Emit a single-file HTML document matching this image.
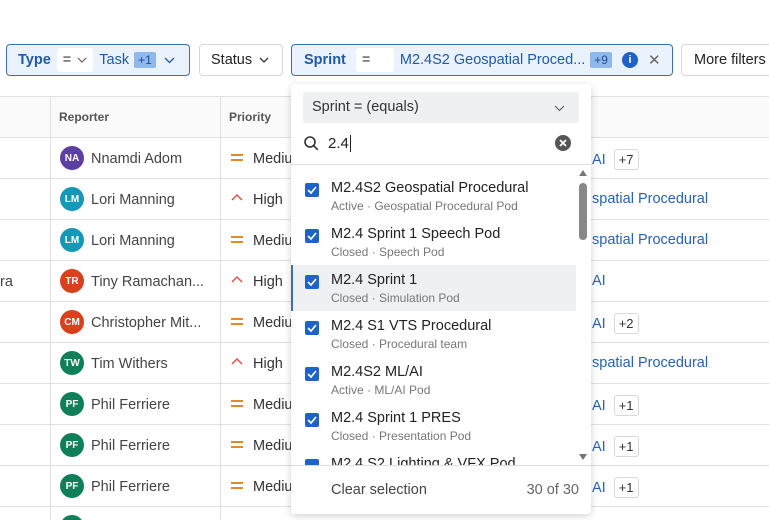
<!DOCTYPE html>
<html style="overflow:hidden;width:769px;height:520px"><head><style>
*{box-sizing:border-box;margin:0;padding:0}
body{width:769px;height:520px;overflow:hidden;background:#fff;font-family:"Liberation Sans",sans-serif;position:relative;color:#333}
.a{position:absolute}
.chip{position:absolute;top:44px;height:32px;border-radius:4px;font-size:14.5px;display:flex;align-items:center;white-space:nowrap}
.blue{background:#e9f2fd;border:1px solid #3f6fa8;color:#1f5aa6}
.wht{background:#fff;border:1px solid #d6d6d6;color:#222}
.eq{background:#fff;height:24px;display:flex;align-items:center;padding:0 6px;color:#333;border-radius:3px}
.badge{background:#8fb8ec;color:#1f4f8f;font-size:12px;padding:1px 4px;border-radius:2px}
.hl{position:absolute;left:0;width:769px;height:1px;background:#e0e0e0}
.vl{position:absolute;top:97px;width:1px;height:423px;background:#e0e0e0}
.av{position:absolute;left:60px;width:24px;height:24px;border-radius:50%;color:#fff;font-size:10px;font-weight:bold;display:flex;align-items:center;justify-content:center}
.nm{position:absolute;left:91px;font-size:14.5px;color:#444;margin-top:2px}
.pr{position:absolute;left:253px;font-size:14.5px;color:#333;margin-top:2px}
.sp{position:absolute;left:592px;font-size:14.5px;color:#2a62ad;margin-top:1px}
.pl{display:inline-block;border:1px solid #d8d8d8;border-radius:3px;padding:0 4px;color:#333;font-size:13px;margin-left:8px;line-height:19px}
.it{position:absolute;left:291px;width:285px;height:46px}
.cb{position:absolute;left:14px;top:10px;width:14px;height:14px;background:#1f63c9;border-radius:2px}
.t1{position:absolute;left:40px;top:7px;font-size:14.5px;color:#222}
.t2{position:absolute;left:40px;top:26px;font-size:12px;color:#777}
</style></head><body>
<div class="chip blue" style="left:6px;width:184px;padding-left:11px"><b>Type</b><span class="eq" style="margin-left:6px">= <svg width="10" height="6" style="margin-left:6px"><path d="M1 1l4 4 4-4" stroke="#555" fill="none"/></svg></span><span style="margin-left:6px">Task</span><span class="badge" style="margin-left:5px">+1</span><svg width="11" height="7" style="margin-left:8px"><path d="M1 1l4.5 4.5L10 1" stroke="#1f5aa6" fill="none" stroke-width="1.3"/></svg></div>
<div class="chip wht" style="left:199px;width:84px;padding-left:11px">Status<svg width="10" height="6" style="margin-left:7px"><path d="M1 1l4 4 4-4" stroke="#333" fill="none" stroke-width="1.3"/></svg></div>
<div class="chip blue" style="left:291px;width:382px;padding-left:12px"><b>Sprint</b><span class="eq" style="margin-left:10px;width:38px">=</span><span style="margin-left:6px">M2.4S2 Geospatial Proced...</span><span class="badge" style="margin-left:5px">+9</span><span style="margin-left:10px;width:16px;height:16px;border-radius:50%;background:#1f63c9;color:#fff;font-size:11px;font-weight:bold;display:flex;align-items:center;justify-content:center">i</span><span style="margin-left:10px;color:#666;font-size:15px">✕</span></div>
<div class="chip wht" style="left:681px;width:100px;padding-left:12px">More filters</div>
<div class="a" style="left:0;top:97px;width:769px;height:40px;background:#fafafa"></div>
<div class="hl" style="top:96px"></div>
<div class="a" style="left:59px;top:110px;font-size:12px;font-weight:bold;color:#555">Reporter</div>
<div class="a" style="left:229px;top:110px;font-size:12px;font-weight:bold;color:#555">Priority</div>
<div class="vl" style="left:50px"></div><div class="vl" style="left:220px"></div>
<div class="hl" style="top:137px"></div><div class="hl" style="top:178px"></div><div class="hl" style="top:219px"></div><div class="hl" style="top:260px"></div><div class="hl" style="top:301px"></div><div class="hl" style="top:342px"></div><div class="hl" style="top:383px"></div><div class="hl" style="top:424px"></div><div class="hl" style="top:465px"></div><div class="hl" style="top:506px"></div>
<div class="a" style="left:0;top:274px;font-size:14.5px;color:#444">ra</div>
<div class="av" style="top:146px;background:#5b3fa3">NA</div><div class="nm" style="top:149px">Nnamdi Adom</div>
<div class="av" style="top:187px;background:#1597b8">LM</div><div class="nm" style="top:190px">Lori Manning</div>
<div class="av" style="top:228px;background:#1597b8">LM</div><div class="nm" style="top:231px">Lori Manning</div>
<div class="av" style="top:269px;background:#d9401c">TR</div><div class="nm" style="top:272px">Tiny Ramachan...</div>
<div class="av" style="top:310px;background:#d9401c">CM</div><div class="nm" style="top:313px">Christopher Mit...</div>
<div class="av" style="top:351px;background:#0f7f5a">TW</div><div class="nm" style="top:354px">Tim Withers</div>
<div class="av" style="top:392px;background:#0f7f5a">PF</div><div class="nm" style="top:395px">Phil Ferriere</div>
<div class="av" style="top:433px;background:#0f7f5a">PF</div><div class="nm" style="top:436px">Phil Ferriere</div>
<div class="av" style="top:474px;background:#0f7f5a">PF</div><div class="nm" style="top:477px">Phil Ferriere</div>
<div class="av" style="top:515px;background:#0f7f5a"></div>
<svg class="a" style="left:231px;top:154px" width="14" height="260">
<g stroke="#e08a2c" stroke-width="2"><path d="M0 1h12M0 6h12"/><path d="M0 83h12M0 88h12"/><path d="M0 165h12M0 170h12"/><path d="M0 247h12M0 252h12"/></g>
<g stroke="#d9534f" stroke-width="1.5" fill="none"><path d="M1 46l5-5 5 5"/><path d="M1 128l5-5 5 5"/><path d="M1 210l5-5 5 5"/></g></svg>
<svg class="a" style="left:231px;top:400px" width="14" height="100"><g stroke="#e08a2c" stroke-width="2"><path d="M0 1h12M0 6h12"/><path d="M0 42h12M0 47h12"/><path d="M0 83h12M0 88h12"/></g></svg>
<div class="pr" style="top:149px">Medium</div><div class="pr" style="top:190px">High</div><div class="pr" style="top:231px">Medium</div><div class="pr" style="top:272px">High</div><div class="pr" style="top:313px">Medium</div><div class="pr" style="top:354px">High</div><div class="pr" style="top:395px">Medium</div><div class="pr" style="top:436px">Medium</div><div class="pr" style="top:477px">Medium</div>
<div class="sp" style="top:148px">AI<span class="pl">+7</span></div>
<div class="sp" style="top:190px">spatial Procedural</div>
<div class="sp" style="top:231px">spatial Procedural</div>
<div class="sp" style="top:272px">AI</div>
<div class="sp" style="top:312px">AI<span class="pl">+2</span></div>
<div class="sp" style="top:354px">spatial Procedural</div>
<div class="sp" style="top:394px">AI<span class="pl">+1</span></div>
<div class="sp" style="top:435px">AI<span class="pl">+1</span></div>
<div class="sp" style="top:476px">AI<span class="pl">+1</span></div>
<div class="a" style="left:291px;top:84px;width:300px;height:430px;background:#fff;border-radius:4px;box-shadow:0 2px 8px rgba(0,0,0,.18);overflow:hidden">
<div class="a" style="left:12px;top:8px;width:276px;height:31px;background:#eef0f2;border-radius:3px;font-size:14.5px;color:#333;padding:7px 9px">Sprint = (equals)<svg class="a" style="right:14px;top:13px" width="11" height="7"><path d="M1 1l4.5 4.5L10 1" stroke="#555" fill="none"/></svg></div>
<svg class="a" style="left:13px;top:52px" width="15" height="15"><circle cx="6" cy="6" r="5" stroke="#333" stroke-width="1.6" fill="none"/><path d="M9.8 9.8l4 4" stroke="#333" stroke-width="1.6"/></svg>
<div class="a" style="left:37px;top:51px;font-size:15px;color:#222">2.4<span style="border-left:1px solid #222;margin-left:1px"></span></div>
<svg class="a" style="left:264px;top:51px" width="16" height="16"><circle cx="8" cy="8" r="8" fill="#555"/><path d="M5 5l6 6M11 5l-6 6" stroke="#fff" stroke-width="1.8"/></svg>
<div class="a" style="left:0;top:80px;width:300px;height:1px;background:#ddd"></div>
<div class="a" style="left:0;top:381px;width:300px;height:1px;background:#ddd"></div>
<div class="a" style="left:40px;top:398px;font-size:14.5px;color:#444">Clear selection</div>
<div class="a" style="right:12px;top:398px;font-size:14.5px;color:#666">30 of 30</div>
<svg class="a" style="left:287px;top:85px" width="10" height="295"><path d="M1 7l4-6 4 6z" fill="#777"/><rect x="1" y="14" width="8" height="57" rx="4" fill="#888"/><path d="M1 285l4 6 4-6z" fill="#777"/></svg>
</div>
<div class="a" style="left:291px;top:165px;width:290px;height:300px;overflow:hidden">
<div class="it" style="left:0;top:100px;background:#eef0f3;border-left:2px solid #3f6fa8"></div>
<div class="it" style="left:0;top:8px"><div class="cb"></div><svg class="a" style="left:16px;top:13px" width="10" height="9"><path d="M1 4l3 3 5-6" stroke="#fff" stroke-width="1.7" fill="none"/></svg><div class="t1">M2.4S2 Geospatial Procedural</div><div class="t2">Active · Geospatial Procedural Pod</div></div>
<div class="it" style="left:0;top:54px"><div class="cb"></div><svg class="a" style="left:16px;top:13px" width="10" height="9"><path d="M1 4l3 3 5-6" stroke="#fff" stroke-width="1.7" fill="none"/></svg><div class="t1">M2.4 Sprint 1 Speech Pod</div><div class="t2">Closed · Speech Pod</div></div>
<div class="it" style="left:0;top:100px"><div class="cb"></div><svg class="a" style="left:16px;top:13px" width="10" height="9"><path d="M1 4l3 3 5-6" stroke="#fff" stroke-width="1.7" fill="none"/></svg><div class="t1">M2.4 Sprint 1</div><div class="t2">Closed · Simulation Pod</div></div>
<div class="it" style="left:0;top:146px"><div class="cb"></div><svg class="a" style="left:16px;top:13px" width="10" height="9"><path d="M1 4l3 3 5-6" stroke="#fff" stroke-width="1.7" fill="none"/></svg><div class="t1">M2.4 S1 VTS Procedural</div><div class="t2">Closed · Procedural team</div></div>
<div class="it" style="left:0;top:192px"><div class="cb"></div><svg class="a" style="left:16px;top:13px" width="10" height="9"><path d="M1 4l3 3 5-6" stroke="#fff" stroke-width="1.7" fill="none"/></svg><div class="t1">M2.4S2 ML/AI</div><div class="t2">Active · ML/AI Pod</div></div>
<div class="it" style="left:0;top:238px"><div class="cb"></div><svg class="a" style="left:16px;top:13px" width="10" height="9"><path d="M1 4l3 3 5-6" stroke="#fff" stroke-width="1.7" fill="none"/></svg><div class="t1">M2.4 Sprint 1 PRES</div><div class="t2">Closed · Presentation Pod</div></div>
<div class="it" style="left:0;top:284px"><div class="cb"></div><div class="t1">M2.4 S2 Lighting &amp; VFX Pod</div></div>
</div>
</body></html>
